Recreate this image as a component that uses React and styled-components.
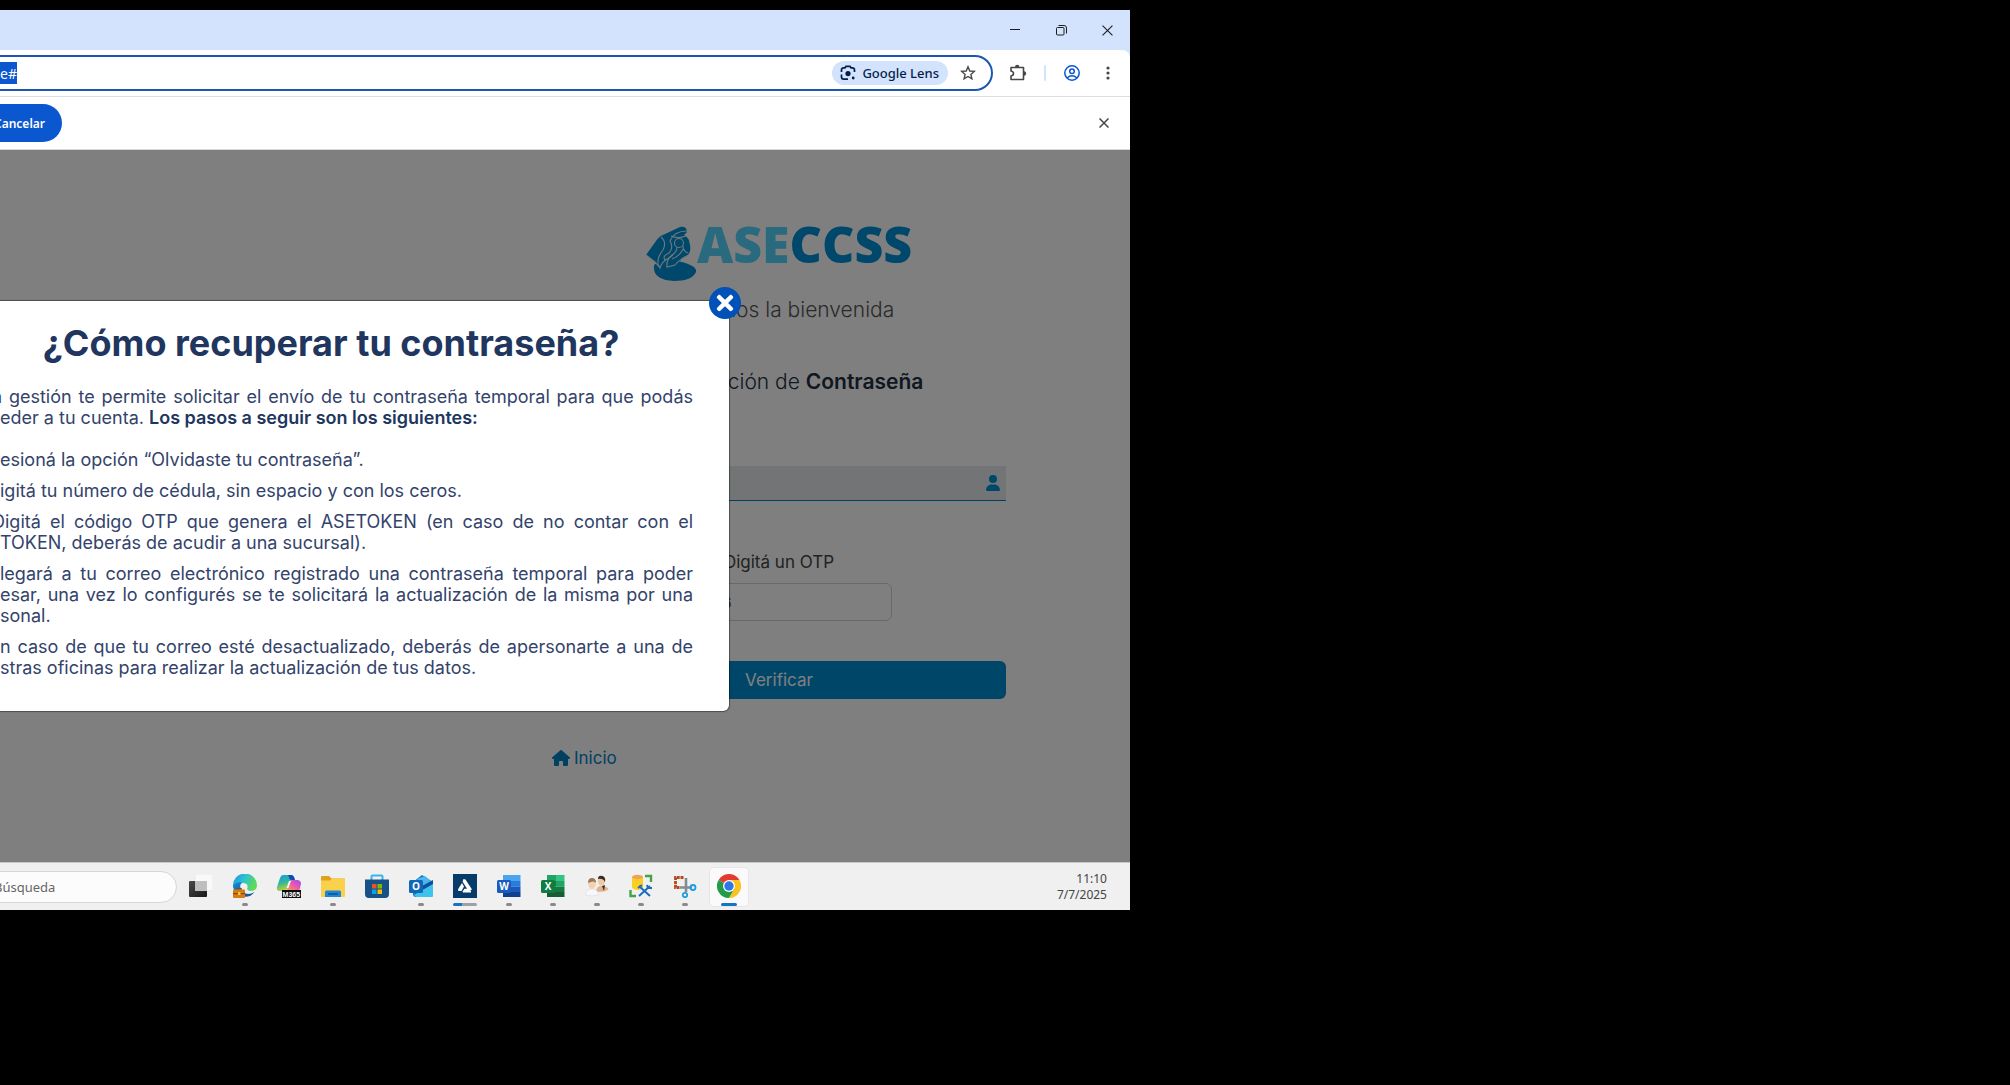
import React from 'react';
import styled, { createGlobalStyle, css } from 'styled-components';
import { FaTimes } from 'react-icons/fa';
import { FaUser, FaHouse } from 'react-icons/fa6';

const brandFont = css`font-family: Inter, "Open Sans", sans-serif;`;
const systemFont = css`font-family: "Noto Sans", "Open Sans", sans-serif;`;

const Global = createGlobalStyle`
  *, *::before, *::after { box-sizing: border-box; }
  body { margin: 0; background: #000; }
  button, input { font: inherit; color: inherit; border: 0; padding: 0; background: none; }
  button { cursor: pointer; }
  svg { display: block; flex: none; }
`;

const Desktop = styled.div`
  min-height: 100vh;
  padding: 10px 880px 175px 0;
  display: flex;
  flex-direction: column;
  overflow: hidden;
  background: #000;
  ${systemFont}
`;

/* ---------- browser chrome ---------- */

const TitleBar = styled.header`
  height: 40px;
  display: flex;
  justify-content: flex-end;
  background: #d3e3fd;
`;

const WindowButton = styled.button`
  width: 46px;
  display: grid;
  place-items: center;
  color: #1c1c1c;
`;

const ToolbarBack = styled.div`
  background: #d3e3fd;
`;

const Toolbar = styled.div`
  height: 47px;
  display: flex;
  align-items: center;
  padding-right: 12px;
  border-bottom: 1px solid #dcdee0;
  border-top-right-radius: 8px;
  background: #fff;
`;

const AddressBar = styled.div`
  flex: 1;
  height: 36px;
  display: flex;
  align-items: center;
  justify-content: space-between;
  padding-right: 14px;
  border: 2px solid #1b57b0;
  border-left: 0;
  border-radius: 0 18px 18px 0;
`;

const AddressInput = styled.input`
  width: 28px;
  height: 22px;
  margin-left: -11px;
  text-align: right;
  font-size: 14px;
  color: #fff;
  background: #0b57d0;
`;

const AddressActions = styled.div`
  display: flex;
  align-items: center;
  gap: 11px;
`;

const LensButton = styled.button`
  height: 24px;
  display: flex;
  align-items: center;
  gap: 6px;
  padding: 0 9px 0 8px;
  border-radius: 12px;
  background: #d3e3fd;
  color: #041e49;
  font-size: 13px;
  font-weight: 500;
`;

const IconButton = styled.button`
  width: ${p => p.$w || 18}px;
  height: 24px;
  display: grid;
  place-items: center;
  color: ${p => p.$color || '#474747'};
`;

const ToolbarActions = styled.div`
  display: flex;
  align-items: center;
  gap: 17px;
  padding-left: 16px;
`;

const Divider = styled.span`
  width: 2px;
  height: 16px;
  border-radius: 1px;
  background: #d3e3fd;
`;

const InfoBar = styled.div`
  height: 53px;
  display: flex;
  align-items: center;
  justify-content: space-between;
  padding-right: 17px;
  border-bottom: 1px solid #d4d6d8;
  background: #fff;
`;

const CancelButton = styled.button`
  height: 38px;
  margin-left: -14px;
  padding: 0 17px 0 8px;
  border-radius: 0 19px 19px 0;
  background: #0b57d0;
  color: #fff;
  font-size: 12px;
  font-weight: 600;
`;

/* ---------- page ---------- */

const Page = styled.main`
  position: relative;
  flex: 1;
  display: flex;
  justify-content: flex-end;
  padding: 72px 124px 0 0;
  background: #fff;
  ${brandFont}
`;

const Form = styled.form`
  width: 454px;
  display: flex;
  flex-direction: column;
  align-items: center;
  font-size: 17px;
  line-height: 24px;
  color: #444a50;
`;

const Logo = styled.div`
  height: 64px;
  display: flex;
  align-items: flex-start;
`;

const LogoName = styled.span`
  font-family: "Open Sans", sans-serif;
  font-weight: 800;
  font-size: 50px;
  line-height: 44px;
  color: #0090d6;
`;

const LogoLight = styled.span`
  color: #54d4ff;
`;

const Heading = styled.p`
  margin: ${p => p.$top}px 0 0;
  font-size: 21px;
  line-height: 28px;
  font-weight: 300;
  color: ${p => p.$dark ? '#212f42' : '#555'};
  strong { font-weight: 600; }
`;

const UserField = styled.div`
  width: 100%;
  height: 35px;
  margin-top: 70px;
  display: flex;
  align-items: center;
  padding-right: 5px;
  border-bottom: 1px solid #0082c4;
  background: #e6e8ec;
  color: #0090d2;
`;

const UserInput = styled.input`
  flex: 1;
  min-width: 0;
  height: 100%;
`;

const Label = styled.label`
  margin-top: 49px;
  color: #444;
`;

const OtpInput = styled.input`
  width: 226px;
  height: 38px;
  margin-top: 9px;
  padding: 0 12px !important;
  border: 1px solid #ced4da !important;
  border-radius: 6px;
  font-size: 15px !important;
`;

const SubmitButton = styled.button`
  width: 100%;
  height: 38px;
  margin-top: 40px;
  border-radius: 6px;
  background: #008cd2;
  color: #fff;
`;

const HomeLink = styled.a`
  align-self: flex-start;
  margin-top: 47px;
  display: flex;
  align-items: center;
  gap: 4px;
  color: #0082c4;
  text-decoration: none;
`;

const Backdrop = styled.div`
  position: absolute;
  inset: 0;
  background: rgba(0, 0, 0, 0.5);
`;

const Dialog = styled.section`
  position: absolute;
  top: 151px;
  left: 0;
  right: 401px;
  padding: 23px 36px 23px 0;
  border-radius: 0 6px 6px 0;
  background: #fff;
  box-shadow: 0 0 1px 1px rgba(0, 0, 0, 0.4);
  color: #33436b;
  font-size: 18px;
  line-height: 21px;
`;

const DialogTitle = styled.h1`
  margin: 0 0 24px;
  padding-right: 31px;
  text-align: center;
  font-size: 36px;
  line-height: 38px;
  font-weight: 700;
  color: #20365f;
`;

const Paragraph = styled.p`
  margin: 0 0 ${p => p.$gap || 10}px;
  strong { font-weight: 600; color: #20365f; }
`;

const Line = styled.span`
  display: block;
  white-space: nowrap;
  text-indent: ${p => p.$cut ? -8 : 0}px;
  text-align-last: ${p => p.$full ? 'justify' : 'left'};
`;

const DialogClose = styled.button`
  position: absolute;
  top: -14px;
  right: -12px;
  width: 32px;
  height: 32px;
  display: grid;
  place-items: center;
  border-radius: 50%;
  background: #0052b8;
  color: #fff;
`;

/* ---------- taskbar ---------- */

const Taskbar = styled.footer`
  height: 48px;
  display: flex;
  align-items: center;
  border-top: 1px solid #c8c8c8;
  background: #f0f0f0;
`;

const SearchInput = styled.input`
  width: 185px;
  height: 32px;
  margin: 0 2px 0 -8px;
  padding: 0 1px !important;
  border: 1px solid #d6d6d6 !important;
  border-radius: 0 16px 16px 0;
  background: #fcfcfc !important;
  font-size: 13px !important;
  &::placeholder { color: #666; opacity: 1; }
`;

const Apps = styled.nav`
  display: flex;
  flex: 1;
`;

const AppButton = styled.button`
  width: 38px;
  height: 38px;
  margin: 0 3px;
  display: flex;
  flex-direction: column;
  align-items: center;
  justify-content: space-between;
  padding-top: 6px;
  border-radius: 4px;
  ${p => p.$active && css`background: #fafafa; box-shadow: 0 0 0 1px #e6e6e6;`}
`;

const Marker = styled.span`
  width: ${p => ({ dot: 6, active: 16, busy: 24, none: 0 })[p.$kind]}px;
  height: 3px;
  border-radius: 2px;
  background: ${p => ({
    dot: '#8a8a8a',
    active: '#1572c8',
    busy: 'linear-gradient(90deg, #1572c8 38%, #a0a0a0 38%)',
    none: 'none',
  })[p.$kind]};
`;

const Clock = styled.time`
  padding-right: 23px;
  text-align: right;
  font-size: 12px;
  line-height: 16px;
  color: #444;
`;

const ClockLine = styled.span`
  display: block;
`;

/* ---------- drawings ---------- */

const LogoMark = () => (
  <svg width="51" height="60" viewBox="0 0 51 60">
    <path fill="#0090d6" d="M8 47 Q7 41 12 42 L24 41 Q34 38 42 42 Q51 45 50 50 Q46 59 28 59 Q9 58 8 47Z" />
    <path fill="#0090d6" d="M0 33 L10 19 Q13 14 19 12 L34 5 Q41 4 41 10 L38 13 Q43 15 44 23 Q46 33 36 36 L33 42 L14 46 L9 40Z" />
    <g fill="none" stroke="#dff2fb" strokeWidth="1.1">
      <path d="M15 15 Q21 20 17 28 Q11 35 12 42 L14 46 Q16 40 20 38" />
      <path d="M0 33 L9 40 L13 45" />
      <path d="M41 9 Q28 9 24 19 Q28 26 23 31 Q16 34 19 38 Q22 37 27 33" />
      <circle cx="33" cy="21" r="4.500" />
      <path d="M31 25 Q31 30 26 33 Q20 38 21 45 L29 43 Q34 37 43 33 M37 24 Q37 29 42 31 M37 27 Q34 34 26 37 M25 14 Q32 17 40 14" />
    </g>
  </svg>
);

const MinimizeIcon = () => <svg width="10" height="10" viewBox="0 0 10 10"><path d="M0 4.500H10" stroke="currentColor" /></svg>;
const RestoreIcon = () => (
  <svg width="11" height="11" viewBox="0 0 11 11" fill="none" stroke="currentColor">
    <rect x=".5" y="2.500" width="7.500" height="7.500" rx="1" /><path d="M2.500 .5H8Q10.500 .5 10.500 3V8.500" />
  </svg>
);
const CrossIcon = ({ size = 11, weight = 1 }) => (
  <svg width={size} height={size} viewBox="0 0 10 10"><path d="M.5 .5L9.500 9.500M9.500 .5L.5 9.500" stroke="currentColor" strokeWidth={weight} /></svg>
);
const LensIcon = () => (
  <svg width="16" height="16" viewBox="0 0 16 16" fill="none" stroke="currentColor" strokeWidth="1.700">
    <path d="M1.500 7V5Q1.500 2.800 3.700 2.800H5L6 1.300H10L11 2.800H12.300Q14.500 2.800 14.500 5V7M1.500 9.500V12Q1.500 14.200 3.700 14.200H8" />
    <circle cx="8" cy="8.600" r="2.600" fill="currentColor" stroke="none" /><circle cx="13.200" cy="13" r="1.400" fill="currentColor" stroke="none" />
  </svg>
);
const StarIcon = () => (
  <svg width="16" height="16" viewBox="0 0 16 16" fill="none" stroke="currentColor" strokeWidth="1.400">
    <path d="M8 1.800L9.800 6L14.300 6.400L10.900 9.400L11.900 13.900L8 11.500L4.100 13.900L5.100 9.400L1.700 6.400L6.200 6Z" />
  </svg>
);
const PuzzleIcon = () => (
  <svg width="18" height="18" viewBox="0 0 18 18">
    <path d="M2 3.500H14.500V15.500H2V12Q4.500 11.500 4.500 9.500Q4.500 7.500 2 7Z" fill="none" stroke="currentColor" strokeWidth="1.600" strokeLinejoin="round" />
    <path d="M6 3A2.200 2.200 0 0 1 10.400 3ZM15 7.300A2.200 2.200 0 0 1 15 11.700Z" fill="currentColor" />
  </svg>
);
const ProfileIcon = () => (
  <svg width="16" height="16" viewBox="0 0 16 16" fill="none" stroke="currentColor" strokeWidth="1.500">
    <circle cx="8" cy="8" r="7.200" /><circle cx="8" cy="6.300" r="2.300" /><path d="M3 13Q8 8.600 13 13" />
  </svg>
);
const DotsIcon = () => (
  <svg width="4" height="16" viewBox="0 0 4 16" fill="currentColor"><circle cx="2" cy="3" r="1.600" /><circle cx="2" cy="8" r="1.600" /><circle cx="2" cy="13" r="1.600" /></svg>
);

const Icon = ({ children }) => <svg width="24" height="24" viewBox="0 0 24 24">{children}</svg>;

const TaskViewIcon = () => (
  <Icon>
    <defs><linearGradient id="tv" x2="1" y2="1"><stop stopColor="#4a4a4a" /><stop offset="1" stopColor="#181818" /></linearGradient></defs>
    <rect x="6" y="0" width="18" height="17" rx="1" fill="#f9f9f9" stroke="#dedede" strokeWidth=".5" />
    <rect x="0" y="7" width="18" height="16" rx="1" fill="url(#tv)" />
    <path d="M6 7H18V17H6Z" fill="#bfbfbf" />
  </Icon>
);
const EdgeIcon = () => (
  <Icon>
    <defs>
      <linearGradient id="e1" x2="1" y2=".4"><stop stopColor="#1b8fd8" /><stop offset=".5" stopColor="#2cc2d4" /><stop offset="1" stopColor="#5fd95a" /></linearGradient>
      <linearGradient id="e2" x2="1" y2="1"><stop stopColor="#1a86d0" /><stop offset="1" stopColor="#0e4f96" /></linearGradient>
    </defs>
    <path d="M0 12A12 12 0 0 1 24 11Q24 17 17.500 17Q13 16.500 14.500 13.500Q15 9 10 9Q3 9 0 14Z" fill="url(#e1)" />
    <path d="M0 12Q3 7.500 9 8.500Q5 13 10 18Q15 22 21.500 18A12 12 0 0 1 0 12Z" fill="url(#e2)" />
    <rect x="0" y="15.500" width="12" height="8.500" rx="1" fill="#d47b12" /><path d="M0 19H12V20.200H0Z" fill="#8d4a07" /><rect x="5" y="18" width="2.500" height="3" fill="#f7bd4d" /><path d="M4 15.500V14.500H8.500V15.500" fill="none" stroke="#8d4a07" />
  </Icon>
);
const CopilotIcon = () => (
  <Icon>
    <defs>
      <linearGradient id="c1" x2=".3" y2="1"><stop stopColor="#1c9be0" /><stop offset=".5" stopColor="#2fb5a0" /><stop offset="1" stopColor="#c6d42c" /></linearGradient>
      <linearGradient id="c2" x1="1" x2=".3" y2="1"><stop stopColor="#9a54e8" /><stop offset=".5" stopColor="#e854b4" /><stop offset="1" stopColor="#f59a4c" /></linearGradient>
    </defs>
    <path d="M6 1H14Q17 1 17.500 5L13 7L10 15Q9 18 6 17H2Q-1 16 0 13L3 4Q4 1 6 1Z" fill="url(#c1)" />
    <path d="M11 1H14.500Q17 1.500 18 6H15Q12 6 12 3Z" fill="#1746b8" />
    <path d="M16 6H21Q24.500 7 24 10L22 18H12L10 15L12 9Q13 6 16 6Z" fill="url(#c2)" />
    <path d="M12 7L14 7L11.500 14H9.500Z" fill="#f4f4f4" />
    <rect x="5" y="16" width="19" height="8" fill="#0a0a0a" />
    <text x="5.600" y="22.700" fontSize="7" fontWeight="700" fontFamily="Liberation Sans, sans-serif" fill="#fff">M365</text>
  </Icon>
);
const FolderIcon = () => (
  <Icon>
    <path d="M0 3Q0 2 1 2H8L10.500 4.500H23Q24 4.500 24 5.500V22H0Z" fill="#e0a21a" />
    <path d="M0 6.500H9L11 4.800H23Q24 4.800 24 6V22Q24 23 23 23H1Q0 23 0 22Z" fill="#fbd14b" />
    <path d="M4 23V18Q4 16.500 5.500 16.500H18.500Q20 16.500 20 18V23Z" fill="#1c86d4" /><path d="M7 20H17" stroke="#0c4f90" strokeWidth="1.500" />
  </Icon>
);
const StoreIcon = () => (
  <Icon>
    <path d="M6.500 6V2.500Q6.500 1.500 7.500 1.500H16.500Q17.500 1.500 17.500 2.500V6" fill="none" stroke="#36b5ea" strokeWidth="2" />
    <path d="M0 5.500H24V20Q24 24 20 24H4Q0 24 0 20Z" fill="#175187" />
    <path d="M7 10H11.500V14.500H7Z" fill="#f25022" /><path d="M12.500 10H17V14.500H12.500Z" fill="#7fba00" /><path d="M7 15.500H11.500V20H7Z" fill="#00a4ef" /><path d="M12.500 15.500H17V20H12.500Z" fill="#ffb900" />
  </Icon>
);
const TileLetter = ({ x = 0, y = 6, color, children }) => (
  <>
    <rect x={x} y={y} width="14" height="13" rx="1.500" fill={color} />
    <text x={x + 7} y={y + 10} textAnchor="middle" fontSize="10" fontWeight="700" fontFamily="Open Sans, sans-serif" fill="#fff">{children}</text>
  </>
);
const OutlookIcon = () => (
  <Icon>
    <path d="M4 8L13 1L24 8V21Q24 23 22 23H7Q4 23 4 20Z" fill="#1574c8" />
    <path d="M8 5L16 2L23 8L14 14Z" fill="#49b6ee" /><path d="M13 12L24 6V13L16 18Z" fill="#0f4f9c" />
    <path d="M5 21L24 10V21Q24 23 22 23H7Z" fill="#3cc4ee" />
    <TileLetter color="#1067b8">O</TileLetter>
  </Icon>
);
const TriangleIcon = () => (
  <Icon>
    <rect width="24" height="24" fill="#073b69" />
    <path d="M10.500 5L12.500 5.500L19 15.500L17 16.500L14.500 15.500L9.500 7.500Z M9 9L11 12.500L8.500 17H5.500Q4.500 16 5.500 14.500Z M9.500 17.500L11.500 14.800H14L18 17V18.500H10Z" fill="#fff" />
  </Icon>
);
const WordIcon = () => (
  <Icon>
    <path d="M6 1H23.500V7H6Z" fill="#4aa5ee" /><path d="M6 7H23.500V12.500H6Z" fill="#2b7cd8" /><path d="M6 12.500H23.500V18H6Z" fill="#185abd" /><path d="M6 18H23.500V23H6Z" fill="#103f91" />
    <TileLetter color="#185abd">W</TileLetter>
  </Icon>
);
const ExcelIcon = () => (
  <Icon>
    <path d="M6 1H15V7H6Z" fill="#21a366" /><path d="M15 1H23.500V7H15Z" fill="#33c481" /><path d="M6 7H15V12.500H6Z" fill="#107c41" /><path d="M15 7H23.500V12.500H15Z" fill="#21a366" />
    <path d="M6 12.500H23.500V18H6Z" fill="#107c41" /><path d="M6 18H23.500V23H6Z" fill="#185c37" />
    <TileLetter color="#107c41">X</TileLetter>
  </Icon>
);
const PeopleIcon = () => (
  <Icon>
    <path d="M11 17Q12 12 16 12Q22 12 23.500 15Q22 18 11 18Z" fill="#e2b48b" /><path d="M17 12L20 11L19 17Z" fill="#3a2b25" />
    <ellipse cx="16.500" cy="7" rx="3.600" ry="4.600" fill="#edc9a4" /><path d="M13 5Q13 1 17.500 2Q21 3 20 8Q18 4 13 5Z" fill="#3a2b25" />
    <path d="M0 21Q1 15 7 15Q13 15 13.500 21Q7 23 0 21Z" fill="#f8f8fc" stroke="#d7d9e2" strokeWidth=".6" />
    <ellipse cx="7" cy="10" rx="3.800" ry="5" fill="#f3d0ae" /><path d="M3 9Q3 4 7 4Q11 4 11 9Q9 6 3 9Z" fill="#9b7757" />
  </Icon>
);
const DatabaseIcon = () => (
  <Icon>
    <path d="M3 3V14Q9 18 14 14V3Z" fill="#fbcf1f" /><ellipse cx="8.500" cy="3" rx="5.500" ry="2.200" fill="#eca456" />
    <path d="M16 2H22V8M1.500 16V22H7" fill="none" stroke="#41a548" strokeWidth="2.400" />
    <path d="M10 12L21 22M21 12L10 22" stroke="#1c6dc0" strokeWidth="2" /><path d="M9 14L13 11M18 11L19 14L23 14" fill="none" stroke="#1c6dc0" strokeWidth="2" />
  </Icon>
);
const SnipIcon = () => (
  <Icon>
    <path d="M10.500 3.500H2.500V13.500H7" fill="none" stroke="#b8451c" strokeWidth="2.800" strokeDasharray="3 .8" />
    <path d="M13 4V18M7 13.500H19" stroke="#858b93" strokeWidth="2.600" fill="none" />
    <circle cx="20" cy="13.500" r="2.500" fill="none" stroke="#1b9de2" strokeWidth="1.800" /><circle cx="12" cy="21" r="2.200" fill="none" stroke="#1b9de2" strokeWidth="1.800" />
  </Icon>
);
const ChromeIcon = () => (
  <Icon>
    <path d="M12 12L1.600 6A12 12 0 0 1 22.400 6Z" fill="#e33b2e" />
    <path d="M12 6H22.400A12 12 0 0 1 12 24L17.200 15Z" fill="#fcc31e" />
    <path d="M12 12L1.600 6A12 12 0 0 0 12 24L17.200 15Z" fill="#229b4b" />
    <circle cx="12" cy="12" r="6" fill="#fff" /><circle cx="12" cy="12" r="4.700" fill="#2f76e8" />
  </Icon>
);

const apps = [
  ['Vista de tareas', TaskViewIcon, 'none'],
  ['Edge', EdgeIcon, 'dot'],
  ['Microsoft 365', CopilotIcon, 'none'],
  ['Explorador', FolderIcon, 'dot'],
  ['Store', StoreIcon, 'none'],
  ['Outlook', OutlookIcon, 'dot'],
  ['Panel', TriangleIcon, 'busy'],
  ['Word', WordIcon, 'dot'],
  ['Excel', ExcelIcon, 'dot'],
  ['Usuarios', PeopleIcon, 'dot'],
  ['Base de datos', DatabaseIcon, 'dot'],
  ['Recortes', SnipIcon, 'dot'],
  ['Chrome', ChromeIcon, 'active'],
];

export default function App() {
  return (
    <Desktop>
      <Global />
      <TitleBar>
        <WindowButton aria-label="Minimizar"><MinimizeIcon /></WindowButton>
        <WindowButton aria-label="Restaurar"><RestoreIcon /></WindowButton>
        <WindowButton aria-label="Cerrar ventana"><CrossIcon /></WindowButton>
      </TitleBar>
      <ToolbarBack>
        <Toolbar>
          <AddressBar>
            <AddressInput aria-label="Dirección" defaultValue="se#" />
            <AddressActions>
              <LensButton><LensIcon />Google Lens</LensButton>
              <IconButton aria-label="Favoritos"><StarIcon /></IconButton>
            </AddressActions>
          </AddressBar>
          <ToolbarActions>
            <IconButton aria-label="Extensiones"><PuzzleIcon /></IconButton>
            <Divider />
            <IconButton aria-label="Perfil" $color="#0b57d0"><ProfileIcon /></IconButton>
            <IconButton aria-label="Menú" $w={20}><DotsIcon /></IconButton>
          </ToolbarActions>
        </Toolbar>
      </ToolbarBack>
      <InfoBar>
        <CancelButton>Cancelar</CancelButton>
        <IconButton aria-label="Cerrar aviso"><CrossIcon size={10} weight={1.5} /></IconButton>
      </InfoBar>

      <Page>
        <Form onSubmit={e => e.preventDefault()}>
          <Logo>
            <LogoMark />
            <LogoName><LogoLight>ASE</LogoLight>CCSS</LogoName>
          </Logo>
          <Heading $top={10}>Te damos la bienvenida</Heading>
          <Heading $top={44} $dark>Recuperación de <strong>Contraseña</strong></Heading>
          <UserField>
            <UserInput aria-label="Usuario" />
            <FaUser size={16} />
          </UserField>
          <Label htmlFor="otp">Digitá un OTP</Label>
          <OtpInput id="otp" defaultValue="123456" />
          <SubmitButton type="submit">Verificar</SubmitButton>
          <HomeLink href="#"><FaHouse size={18} />Inicio</HomeLink>
        </Form>
        <Backdrop />
        <Dialog role="dialog" aria-labelledby="dialog-title">
          <DialogClose aria-label="Cerrar"><FaTimes size={24} /></DialogClose>
          <DialogTitle id="dialog-title">¿Cómo recuperar tu contraseña?</DialogTitle>
          <Paragraph $gap={21}>
            <Line $full $cut>a gestión te permite solicitar el envío de tu contraseña temporal para que podás</Line>
            <Line>eder a tu cuenta. <strong>Los pasos a seguir son los siguientes:</strong></Line>
          </Paragraph>
          <Paragraph><Line>esioná la opción “Olvidaste tu contraseña”.</Line></Paragraph>
          <Paragraph><Line>igitá tu número de cédula, sin espacio y con los ceros.</Line></Paragraph>
          <Paragraph>
            <Line $full $cut>Digitá el código OTP que genera el ASETOKEN (en caso de no contar con el</Line>
            <Line>TOKEN, deberás de acudir a una sucursal).</Line>
          </Paragraph>
          <Paragraph>
            <Line $full>legará a tu correo electrónico registrado una contraseña temporal para poder</Line>
            <Line $full>esar, una vez lo configurés se te solicitará la actualización de la misma por una</Line>
            <Line>sonal.</Line>
          </Paragraph>
          <Paragraph>
            <Line $full>n caso de que tu correo esté desactualizado, deberás de apersonarte a una de</Line>
            <Line>stras oficinas para realizar la actualización de tus datos.</Line>
          </Paragraph>
        </Dialog>
      </Page>

      <Taskbar>
        <SearchInput aria-label="Búsqueda" placeholder="Búsqueda" />
        <Apps>
          {apps.map(([name, Glyph, kind]) => (
            <AppButton key={name} aria-label={name} $active={kind === 'active'}>
              <Glyph />
              <Marker $kind={kind} />
            </AppButton>
          ))}
        </Apps>
        <Clock>
          <ClockLine>11:10</ClockLine>
          <ClockLine>7/7/2025</ClockLine>
        </Clock>
      </Taskbar>
    </Desktop>
  );
}
